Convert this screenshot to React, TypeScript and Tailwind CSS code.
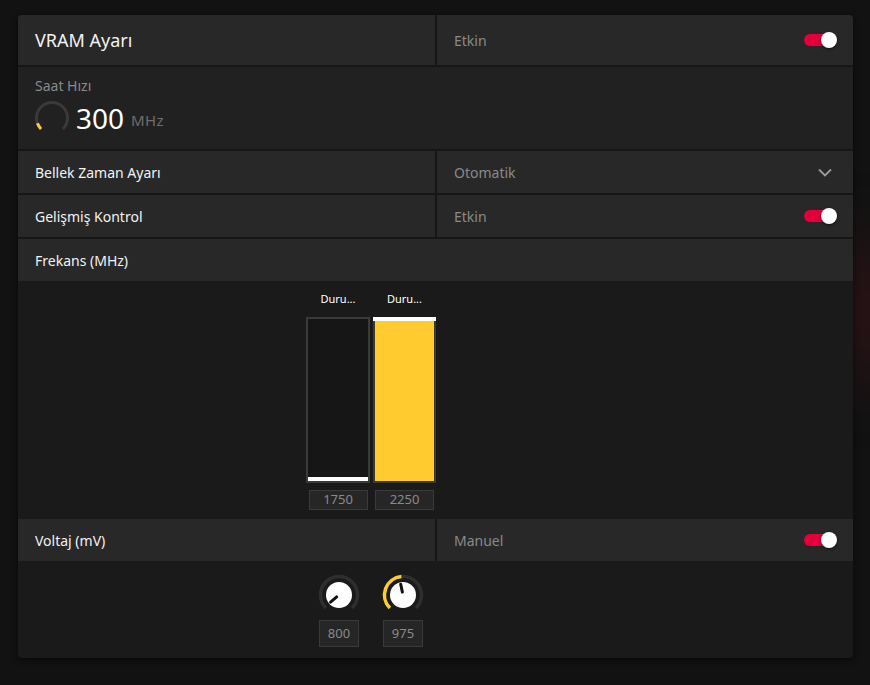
import React from 'react';

const font = { fontFamily: '"Noto Sans", Roboto, sans-serif' };

// point on a circle, angle in degrees (0 = right, clockwise)
function pt(cx: number, cy: number, r: number, a: number) {
  const rad = (a * Math.PI) / 180;
  return [cx + r * Math.cos(rad), cy + r * Math.sin(rad)];
}

function arc(cx: number, cy: number, r: number, from: number, to: number) {
  const [x1, y1] = pt(cx, cy, r, from);
  const [x2, y2] = pt(cx, cy, r, to);
  const large = to - from > 180 ? 1 : 0;
  return `M ${x1} ${y1} A ${r} ${r} 0 ${large} 1 ${x2} ${y2}`;
}

function Toggle() {
  return (
    <div className="relative w-[33px] h-4 shrink-0">
      <div className="absolute left-0 top-[2px] w-[28px] h-3 rounded-full bg-[#e4003a]" />
      <div className="absolute right-0 top-0 w-4 h-4 rounded-full bg-white shadow-[0_1px_3px_rgba(0,0,0,0.6)]" />
    </div>
  );
}

function Gauge() {
  return (
    <svg width="36" height="36" viewBox="0 0 36 36">
      <path d={arc(18, 18, 15.5, 135, 405)} fill="none" stroke="#3a3a3a" strokeWidth="3" />
      <path d={arc(18, 18, 15.5, 135, 160)} fill="none" stroke="#ffcb2f" strokeWidth="3" />
    </svg>
  );
}

function Knob({ angle, fill }: { angle: number; fill?: number }) {
  const [x1, y1] = pt(22, 22, 3, angle);
  const [x2, y2] = pt(22, 22, 11, angle);
  return (
    <svg width="44" height="44" viewBox="0 0 44 44">
      <path d={arc(22, 22, 18.5, 135, 405)} fill="none" stroke="#2e2e2e" strokeWidth="3.5" />
      {fill ? <path d={arc(22, 22, 18.5, 135, fill)} fill="none" stroke="#ffcb2f" strokeWidth="3.5" /> : null}
      <circle cx="22" cy="22" r="13" fill="#ffffff" />
      <line x1={x1} y1={y1} x2={x2} y2={y2} stroke="#111" strokeWidth="3" strokeLinecap="round" />
    </svg>
  );
}

function ValueBox({ value, w }: { value: string; w: string }) {
  return (
    <div className={`${w} flex items-center justify-center bg-[#262626] border border-[#3a3a3a] text-[13px] text-[#8a8a8a]`}>
      {value}
    </div>
  );
}

function SplitRow({ label, value, right, big }: { label: string; value: string; right: React.ReactNode; big?: boolean }) {
  return (
    <div className={`grid grid-cols-[417px_416px] gap-[2px] bg-[#161616] ${big ? 'h-[50px]' : 'h-[42px]'}`}>
      <div className={`bg-[#282828] flex items-center pl-[17px] text-[#f2f2f2] ${big ? 'text-[18px]' : 'text-[14px]'}`}>
        {label}
      </div>
      <div className="bg-[#282828] flex items-center justify-between pl-[17px] pr-4 text-[14px] text-[#8a8a8a]">
        <span>{value}</span>
        {right}
      </div>
    </div>
  );
}

export default function App() {
  return (
    <div className="relative w-[870px] h-[685px] bg-[#121212] overflow-hidden pt-[15px] pl-[18px]" style={font}>
      {/* faint glow behind the panel */}
      <div className="absolute right-[-40px] top-[250px] w-[80px] h-[120px] rounded-full bg-[#4a141c] blur-2xl opacity-60" />

      <div className="relative w-[835px] rounded-[4px] overflow-hidden flex flex-col bg-[#161616] shadow-[0_2px_6px_rgba(0,0,0,0.6)]">
        <SplitRow label="VRAM Ayarı" value="Etkin" right={<Toggle />} big />

        <div className="mt-[2px] h-[82px] bg-[#212121] pl-[17px] pt-[10px]">
          <div className="text-[14px] text-[#8a8a8a] leading-[18px]">Saat Hızı</div>
          <div className="flex items-center mt-[5px] -ml-[1px]">
            <Gauge />
            <span className="ml-[6px] text-[28px] text-white leading-none">300</span>
            <span className="ml-[7px] mt-[4px] text-[15px] text-[#6e6e6e] tracking-wide">MHz</span>
          </div>
        </div>

        <div className="mt-[2px]">
          <SplitRow
            label="Bellek Zaman Ayarı"
            value="Otomatik"
            right={
              <svg width="14" height="9" viewBox="0 0 14 9" className="mr-[5px]">
                <path d="M1 1.5 L7 7.5 L13 1.5" fill="none" stroke="#9a9a9a" strokeWidth="1.8" />
              </svg>
            }
          />
        </div>
        <div className="mt-[2px]">
          <SplitRow label="Gelişmiş Kontrol" value="Etkin" right={<Toggle />} />
        </div>

        <div className="mt-[2px] h-[42px] bg-[#282828] flex items-center pl-[17px] text-[14px] text-[#f2f2f2]">
          Frekans (MHz)
        </div>

        <div className="h-[238px] bg-[#1a1a1a] pl-[288px] pt-[10px] flex gap-[3px]">
          <div className="flex flex-col items-center w-[64px]">
            <div className="text-[11px] text-white h-[26px] leading-[16px]">Duru...</div>
            <div className="w-[64px] h-[166px] border-2 border-[#3a3a3a] bg-[#161616] flex flex-col justify-end">
              <div className="h-[4px] bg-white" />
            </div>
            <div className="mt-[7px] h-[20px] flex justify-center">
              <ValueBox value="1750" w="w-[59px]" />
            </div>
          </div>
          <div className="flex flex-col items-center w-[63px]">
            <div className="text-[11px] text-white h-[26px] leading-[16px]">Duru...</div>
            <div className="w-[63px] h-[166px] border-2 border-t-0 border-[#3a3a3a] bg-[#ffcb2f] flex flex-col">
              <div className="h-[4px] bg-white -mx-[2px]" />
            </div>
            <div className="mt-[7px] h-[20px] flex justify-center">
              <ValueBox value="2250" w="w-[59px]" />
            </div>
          </div>
        </div>

        <SplitRow label="Voltaj (mV)" value="Manuel" right={<Toggle />} />

        <div className="h-[97px] bg-[#1a1a1a] pl-[301px] pt-[12px] flex gap-[24px]">
          <div className="flex flex-col items-center w-[40px]">
            <Knob angle={140} />
            <div className="mt-[3px] h-[27px] flex">
              <ValueBox value="800" w="w-[40px]" />
            </div>
          </div>
          <div className="flex flex-col items-center w-[40px]">
            <Knob angle={258} fill={265} />
            <div className="mt-[3px] h-[27px] flex">
              <ValueBox value="975" w="w-[40px]" />
            </div>
          </div>
        </div>
      </div>
    </div>
  );
}
